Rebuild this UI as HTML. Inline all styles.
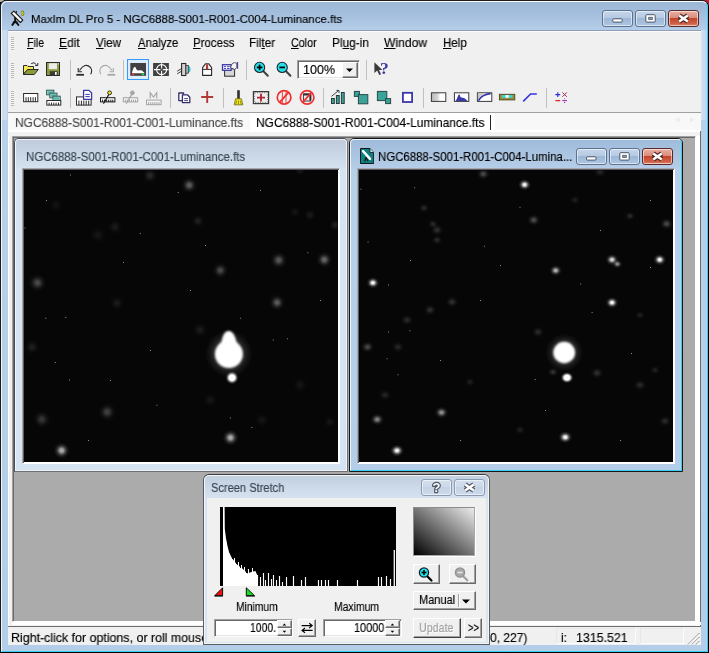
<!DOCTYPE html>
<html lang="en"><head><meta charset="utf-8"><title>MaxIm DL Pro 5 - NGC6888-S001-R001-C004-Luminance.fts</title>
<style>
html,body{margin:0;padding:0;background:#000;}
body{width:709px;height:653px;overflow:hidden;position:relative;font-family:"Liberation Sans",sans-serif;}
.t{position:absolute;white-space:pre;line-height:1;transform-origin:0 0;display:inline-block;will-change:transform;-webkit-text-stroke:0.15px currentColor;}
.t u{text-decoration:underline;text-underline-offset:1px;text-decoration-thickness:1px;}
#win{position:absolute;left:0;top:0;width:709px;height:653px;overflow:hidden;}
#frame{position:absolute;left:0;top:0;width:709px;height:653px;box-sizing:border-box;
  border:1px solid #1c1c1c;border-right-color:#000;border-bottom-color:#000;border-radius:6px 7px 0 0;
  background:linear-gradient(#9cb7d6 0px,#a3bedc 12px,#b3cce8 28px,#b9d1ea 31px,#b4cee9 100%);}
#frame:before{content:"";position:absolute;left:0;top:0;right:0;bottom:0;border-top:1px solid #fcfeff;border-left:1px solid #eef5fd;border-radius:6px 6px 0 0;
  border-right:1px solid #38cdf2;border-bottom:1px solid #38cdf2;}
#client{position:absolute;left:8px;top:30px;width:693px;height:615px;background:#f0f0f0;overflow:hidden;}
.cb{position:absolute;box-sizing:border-box;border:1px solid #5c7290;border-radius:3px;box-shadow:inset 0 0 0 1px rgba(255,255,255,.55);}
.sep{position:absolute;width:1px;background:#c2c0be;}
.grip{position:absolute;width:3px;background:repeating-linear-gradient(#b8b8b8 0,#b8b8b8 1px,#f6f6f6 1px,#f6f6f6 2px);}
.btn{position:absolute;box-sizing:border-box;background:#f0f0f0;border:1px solid;border-color:#fff #696969 #696969 #fff;box-shadow:inset -1px -1px 0 #a0a0a0, inset 1px 1px 0 #f0f0f0;}
.edit{position:absolute;box-sizing:border-box;background:#fff;border:1px solid;border-color:#a0a0a0 #fff #fff #a0a0a0;box-shadow:inset 1px 1px 0 #696969, inset -1px -1px 0 #e3e3e3;}
.child{position:absolute;box-sizing:border-box;}
</style></head><body>
<div id="win">
<div style="position:absolute;left:703px;top:0;width:6px;height:6px;background:#c81e3c"></div>
<div style="position:absolute;left:0;top:0;width:4px;height:2px;background:#b4b0ac"></div>
<div id="frame"></div>
<div style="position:absolute;left:2px;top:30px;width:5px;height:90px;background:#cbdcf0"></div>
<div style="position:absolute;left:701px;top:30px;width:6px;height:90px;background:linear-gradient(to right,#d4e2f3,#c6d9ef 60%,#bcd3ec)"></div>

<div id="titlebar" style="position:absolute;left:0;top:0;width:709px;height:30px">
<svg width="18" height="18" viewBox="0 0 18 18" style="position:absolute;left:10px;top:9px">
<path d="M5.2 8.6 V13 M5.2 12 L2.4 15.9 M5.2 12 L8.4 15.9 M3.6 13.2 H6.8" stroke="#0c0c0c" stroke-width="1.9" fill="none" stroke-linecap="round"/>
<path d="M5.4 2.2 L7 2 L6.8 4.4 Z" fill="#111"/>
<path d="M1.2 4.4 L3.9 2.1 L12.8 11.1 L10.4 13.5 Z" fill="#fdfaf6" stroke="#161616" stroke-width="1.1" stroke-linejoin="round"/>
<path d="M11.4 2.4 L13.4 1.9 L13.9 4.2 L13.3 6.6 L11.6 6.2 L12.2 4.3 Z" fill="#f4ee08" stroke="#6a6a10" stroke-width="0.7" stroke-linejoin="round"/>
</svg>
<span class="t" style="transform:scaleX(0.9696);left:30.70px;top:13.80px;font-size:11.8px;color:#000;">MaxIm DL Pro 5 - NGC6888-S001-R001-C004-Luminance.fts</span>
<div class="cb" style="left:602px;top:10px;width:31px;height:17px;background:linear-gradient(#c4d6ea 0%,#b6cae2 45%,#9db7d6 50%,#aec6e2 100%);border-color:#5c7290;"><svg width="31" height="17" viewBox="0 0 31 17" style="position:absolute;left:-1px;top:-1px"><rect x="10.8" y="8.8" width="9.4" height="3.3" rx="0.8" fill="#fff" stroke="#4a5568" stroke-width="1"/></svg></div>
<div class="cb" style="left:635px;top:10px;width:31px;height:17px;background:linear-gradient(#c4d6ea 0%,#b6cae2 45%,#9db7d6 50%,#aec6e2 100%);border-color:#5c7290;"><svg width="31" height="17" viewBox="0 0 31 17" style="position:absolute;left:-1px;top:-1px"><rect x="10.8" y="4.7" width="9.4" height="7.4" rx="0.8" fill="#fff" stroke="#4a5568" stroke-width="1"/><rect x="13.7" y="7.3" width="3.6" height="2.2" fill="#8aa0c0" stroke="#4a5568" stroke-width="0.8"/></svg></div>
<div class="cb" style="left:668px;top:10px;width:31px;height:17px;background:linear-gradient(#e9b0a4 0%,#dc8c7c 45%,#c4452c 50%,#cf6248 85%,#dc8a70 100%);border-color:#5a2a2a;"><svg width="31" height="17" viewBox="0 0 31 17" style="position:absolute;left:-1px;top:-1px"><path d="M11.2 5.5 L19.8 11.5 M19.8 5.5 L11.2 11.5" stroke="#4a2626" stroke-width="4.8" stroke-linecap="butt" fill="none"/><path d="M11.2 5.5 L19.8 11.5 M19.8 5.5 L11.2 11.5" stroke="#fff" stroke-width="2.6" stroke-linecap="butt" fill="none"/></svg></div>
</div>
<div id="client">
<div style="position:absolute;left:0;top:0;width:693px;height:1px;background:#929cb4;z-index:2"></div><div style="position:absolute;left:0;top:1px;width:693px;height:1px;background:#fbfbfb;z-index:2"></div>
<div id="menubar" style="position:absolute;left:0;top:0;width:693px;height:26px">
<div class="grip" style="left:3px;top:7px;height:14px"></div>
<span class="t" style="transform:scaleX(0.8451);left:18.85px;top:6.80px;font-size:12.6px;color:#000;"><u>F</u>ile</span>
<span class="t" style="transform:scaleX(0.9527);left:50.85px;top:6.80px;font-size:12.6px;color:#000;"><u>E</u>dit</span>
<span class="t" style="transform:scaleX(0.9259);left:88.00px;top:6.80px;font-size:12.6px;color:#000;"><u>V</u>iew</span>
<span class="t" style="transform:scaleX(0.8996);left:130.00px;top:6.80px;font-size:12.6px;color:#000;"><u>A</u>nalyze</span>
<span class="t" style="transform:scaleX(0.9096);left:185.09px;top:6.80px;font-size:12.6px;color:#000;"><u>P</u>rocess</span>
<span class="t" style="transform:scaleX(0.9369);left:240.86px;top:6.80px;font-size:12.6px;color:#000;">Fil<u>t</u>er</span>
<span class="t" style="transform:scaleX(0.8495);left:283.00px;top:6.80px;font-size:12.6px;color:#000;"><u>C</u>olor</span>
<span class="t" style="transform:scaleX(0.9398);left:323.76px;top:6.80px;font-size:12.6px;color:#000;">Pl<u>u</u>g-in</span>
<span class="t" style="transform:scaleX(0.9607);left:376.20px;top:6.80px;font-size:12.6px;color:#000;"><u>W</u>indow</span>
<span class="t" style="transform:scaleX(0.9158);left:435.28px;top:6.80px;font-size:12.6px;color:#000;"><u>H</u>elp</span>
</div>
<div id="toolbar1" style="position:absolute;left:0;top:26px;width:693px;height:28px">
<div class="grip" style="left:3px;top:7px;height:15px"></div>
<div class="sep" style="left:62px;top:4px;height:20px"></div>
<div class="sep" style="left:115px;top:4px;height:20px"></div>
<div class="sep" style="left:238px;top:4px;height:20px"></div>
<div class="sep" style="left:358px;top:4px;height:20px"></div>
<div style="position:absolute;left:119px;top:3px;width:22px;height:21px;box-sizing:border-box;border:1.4px solid #3399ff;background:#dcecfb"></div>
<svg class="icons" width="693" height="28" viewBox="8 56 693 28" style="position:absolute;left:0;top:0;will-change:transform"><g><path d="M23.5 65.5 H27 L28 66.5 H33.5 V69.5 H27.5 L23.5 74.5 Z" fill="#f4ec50" stroke="#2b2b2b" stroke-width="1" stroke-linejoin="round"/><path d="M27.5 69.5 H38.3 L34.3 74.5 H23.5 Z" fill="#8c9a3a" stroke="#2b2b2b" stroke-width="1" stroke-linejoin="round"/><path d="M31.2 63.6 Q34 61.2 36.6 64.8" stroke="#2b2b2b" stroke-width="1" fill="none"/><path d="M35.2 65.6 H37.8 V63" stroke="#2b2b2b" stroke-width="1" fill="none"/></g><g><rect x="46.5" y="62.5" width="13" height="13" fill="#8c9a3a" stroke="#2b2b2b" stroke-width="1"/><rect x="48.8" y="63.2" width="8.2" height="6" fill="#ececec"/><rect x="49.8" y="71.2" width="8" height="4" fill="#3a3a3a"/><rect x="55" y="72" width="1.7" height="2.8" fill="#fff"/><rect x="58" y="63.4" width="1" height="1" fill="#fff"/></g><g fill="none" stroke="#2b2b2b" stroke-width="1.1"><path d="M79.5 70.5 Q85 62 90.5 67.5 Q92.8 71 90.6 74.3"/><path d="M78.2 68 V71.8 H82" /><path d="M76.3 74.8 H84" stroke-width="1.8"/></g><g fill="none" stroke="#a8a8a8" stroke-width="1.1"><path d="M112 70.5 Q106.5 62 101 67.5 Q98.7 71 100.9 74.3"/><path d="M113.3 68 V71.8 H109.5"/><path d="M107.5 74.8 H115.2" stroke-width="1.8"/></g><g><rect x="130.3" y="63" width="15.7" height="12.8" fill="#404040"/><path d="M132 73.2 L132.6 70.2 L133.8 67.6 L135.2 66.8 L136.4 69.2 L137.6 70.6 L140.4 70.2 L142 70.6 L143.6 72 L144.8 73.2 Z" fill="#fff"/><rect x="132.2" y="73.6" width="2.2" height="1.6" fill="#ff3050"/><rect x="141.8" y="73.6" width="2.2" height="1.6" fill="#30e040"/></g><g><rect x="153.1" y="63" width="15.8" height="13" fill="#404040"/><circle cx="161.6" cy="69.6" r="5" fill="none" stroke="#fff" stroke-width="1.1"/><path d="M161.6 63.2 V68.4 M161.6 70.8 V75.8 M154 69.6 H160.4 M162.8 69.6 H168.6" stroke="#fff" stroke-width="1.1"/></g><g><path d="M187.6 65.6 Q190.3 66.4 190.2 69.3 Q190.3 72.2 187.6 73" fill="#28d8e8" stroke="#1a9aa8" stroke-width="0.6"/><rect x="185.6" y="65.4" width="2.6" height="7.8" fill="#d0d0d0" stroke="#2b2b2b" stroke-width="0.8"/><rect x="181.6" y="63.5" width="4.2" height="12" fill="#d4d4d4" stroke="#2b2b2b" stroke-width="1.1"/><path d="M181.2 68.8 L177.2 71.2 M181.2 71.4 L177.2 73.8" stroke="#2b2b2b" stroke-width="0.9" fill="none"/></g><g><path d="M202.6 75.4 V67.6 L205.4 63.8 H208.8 L211.6 67.6 V75.4 Z" fill="#fff" stroke="#2b2b2b" stroke-width="1.1" stroke-linejoin="round"/><path d="M202.8 69.4 H211.4" stroke="#2b2b2b" stroke-width="1"/><rect x="205.9" y="64.2" width="2.3" height="5" fill="#b03a3a"/></g><g><rect x="224.6" y="68.8" width="10" height="7.4" fill="#d6d6d6" stroke="#2b2b2b" stroke-width="1"/><rect x="222.5" y="64.7" width="8.6" height="5.6" fill="#f4f4ff" stroke="#3a38a8" stroke-width="1.3"/><path d="M224 66.6 H226 M227 66.6 H229.6 M224 68.5 H226 M227 68.5 H229.6" stroke="#3a38a8" stroke-width="0.9"/><path d="M230.4 67.6 L232.2 63.6 Q234.6 61.6 236.8 63.4 L236.8 67.8 L234.6 69.4 Z" fill="#f6f6f6" stroke="#444" stroke-width="0.9" stroke-linejoin="round"/><path d="M237.6 62 V68.8" stroke="#3a38a8" stroke-width="1.1"/></g><g><path d="M263.20000000000005 71.0 L267.8 75.80000000000001" stroke="#404040" stroke-width="2" stroke-linecap="round"/><circle cx="259.6" cy="67.4" r="5.1" fill="#26dfe8" stroke="#1a2a33" stroke-width="1.1"/><path d="M256.8 67.4 H262.40000000000003" stroke="#000" stroke-width="1.7"/><path d="M259.6 64.60000000000001 V70.2" stroke="#000" stroke-width="1.7"/></g><g><path d="M285.8 71.0 L290.4 75.80000000000001" stroke="#404040" stroke-width="2" stroke-linecap="round"/><circle cx="282.2" cy="67.4" r="5.1" fill="#26dfe8" stroke="#1a2a33" stroke-width="1.1"/><path d="M279.4 67.4 H285.0" stroke="#000" stroke-width="1.7"/></g><g><path d="M374.4 62.2 V73 L377.2 70.6 L379.2 75 L381 74.2 L379 70 H382.4 Z" fill="#3a3a3a"/><text x="380.0" y="73.6" font-family='"Liberation Serif", serif' font-weight="bold" font-size="17.5" fill="#3a38a8">?</text></g></svg>
<div class="edit" style="left:289px;top:3.8px;width:62.6px;height:19.6px"></div>
<div class="btn" style="left:334.4px;top:5.8px;width:15.4px;height:15.8px"><svg width="13" height="14" style="position:absolute;left:0;top:0"><path d="M3 5.5 h7 l-3.5 3.5z" fill="#000"/></svg></div>
<span class="t" style="transform:scaleX(0.9934);left:295.40px;top:7.60px;font-size:12.6px;color:#000;">100%</span>
</div>
<div id="toolbar2" style="position:absolute;left:0;top:54px;width:693px;height:28px">
<div class="grip" style="left:3px;top:7px;height:15px"></div>
<div class="sep" style="left:62px;top:4px;height:20px"></div>
<div class="sep" style="left:162px;top:4px;height:20px"></div>
<div class="sep" style="left:215px;top:4px;height:20px"></div>
<div class="sep" style="left:315px;top:4px;height:20px"></div>
<div class="sep" style="left:415px;top:4px;height:20px"></div>
<div class="sep" style="left:538px;top:4px;height:20px"></div>
<svg class="icons" width="693" height="28" viewBox="8 84 693 28" style="position:absolute;left:0;top:0;will-change:transform"><g><rect x="23.6" y="93.5" width="14.2" height="8.2" fill="#fff" stroke="#2b2b2b" stroke-width="1"/><path d="M26.0 97.2 V101.7M28.3 97.2 V101.7M30.7 97.2 V101.7M33.1 97.2 V101.7M35.4 97.2 V101.7" stroke="#2b2b2b" stroke-width="1" fill="none"/></g><g><rect x="46.6" y="90.2" width="7.2" height="4.6" fill="#bfe8e0" stroke="#2a5a55" stroke-width="1"/><rect x="47.6" y="91.2" width="5.2" height="2.5999999999999996" fill="#3aa39a" opacity="0.75"/><rect x="49.8" y="93.2" width="7.2" height="4.6" fill="#bfe8e0" stroke="#2a5a55" stroke-width="1"/><rect x="50.8" y="94.2" width="5.2" height="2.5999999999999996" fill="#3aa39a" opacity="0.75"/><rect x="53" y="96.2" width="7.2" height="4.6" fill="#bfe8e0" stroke="#2a5a55" stroke-width="1"/><rect x="54" y="97.2" width="5.2" height="2.5999999999999996" fill="#3aa39a" opacity="0.75"/><rect x="46.8" y="100.5" width="14" height="4.6" fill="#fff" stroke="#2b2b2b" stroke-width="1"/><path d="M49.1 102.6 V105.1M51.5 102.6 V105.1M53.8 102.6 V105.1M56.1 102.6 V105.1M58.5 102.6 V105.1" stroke="#2b2b2b" stroke-width="1" fill="none"/></g><g><rect x="76.5" y="96.9" width="14.6" height="8.2" fill="#fff" stroke="#2b2b2b" stroke-width="1"/><path d="M78.9 100.6 V105.10000000000001M81.4 100.6 V105.10000000000001M83.8 100.6 V105.10000000000001M86.2 100.6 V105.10000000000001M88.7 100.6 V105.10000000000001" stroke="#2b2b2b" stroke-width="1" fill="none"/><path d="M83.6 90.4 H89 L91.6 93 V99.4 H83.6 Z" fill="#fff" stroke="#3a38a8" stroke-width="1.3" stroke-linejoin="round"/><path d="M85.4 94.4 H89.8 M85.4 96.6 H89.8" stroke="#3a38a8" stroke-width="1"/></g><g><rect x="100.5" y="97.7" width="14.4" height="4.2" fill="#fff" stroke="#1a1a1a" stroke-width="1"/><path d="M102.6 99.6 V101.9M104.6 99.6 V101.9M106.7 99.6 V101.9M108.7 99.6 V101.9M110.8 99.6 V101.9M112.8 99.6 V101.9" stroke="#1a1a1a" stroke-width="1" fill="none"/><path d="M103.4 103.8 L109.4 93.6" stroke="#1a1a1a" stroke-width="1.1" fill="none"/><circle cx="109.6" cy="92.8" r="1.9" fill="#f4e820" stroke="#1a1a1a" stroke-width="0.9"/></g><g><rect x="123.3" y="97.7" width="14.4" height="4.2" fill="#f4f4f4" stroke="#a4a4a4" stroke-width="1"/><path d="M125.4 99.6 V101.9M127.4 99.6 V101.9M129.5 99.6 V101.9M131.5 99.6 V101.9M133.6 99.6 V101.9M135.6 99.6 V101.9" stroke="#a4a4a4" stroke-width="1" fill="none"/><path d="M126.2 103.8 L132.2 93.6" stroke="#a4a4a4" stroke-width="1.1" fill="none"/><circle cx="132.4" cy="92.8" r="1.9" fill="#a4a4a4" stroke="#a4a4a4" stroke-width="0.9"/></g><g><rect x="146.5" y="100.1" width="14.6" height="4.6" fill="#f4f4f4" stroke="#a4a4a4" stroke-width="1"/><path d="M148.6 102.2 V104.69999999999999M150.7 102.2 V104.69999999999999M152.8 102.2 V104.69999999999999M154.8 102.2 V104.69999999999999M156.9 102.2 V104.69999999999999M159.0 102.2 V104.69999999999999" stroke="#a4a4a4" stroke-width="1" fill="none"/><path d="M150.2 98.6 V92.6 L153.5 97 L156.8 92.6 V98.6" stroke="#a4a4a4" stroke-width="1.1" fill="none"/></g><g fill="#fff" stroke="#34306a" stroke-width="1.3" stroke-linejoin="round"><path d="M178.8 93 H183.6 V100.6 H178.8 Z"/><path d="M182.4 94.8 H187.4 L189.8 97.2 V102.6 H182.4 Z"/><path d="M184.2 98.6 H188 M184.2 100.6 H188" stroke-width="0.9"/></g><g stroke="#b33838" stroke-width="1.9" fill="none"><path d="M201.2 97 H213.2 M207.2 91 V103"/></g><g><path d="M237.2 90.2 h2.6 v8.8 h-2.6z" fill="#303030"/><path d="M235.6 98.8 H241.4 L242.8 104.8 H234.2 Z" fill="#f2ea18" stroke="#6a6410" stroke-width="0.8"/><path d="M236.6 100.6 L235.8 104.4 M238.5 100.6 V104.4 M240.4 100.6 L241.2 104.4" stroke="#6a6410" stroke-width="0.7"/></g><g><rect x="253.4" y="91.6" width="15.2" height="12" fill="#efefef" stroke="#3a3a3a" stroke-width="1.2"/><rect x="254.6" y="92.8" width="12.8" height="9.6" fill="none" stroke="#505050" stroke-width="1" stroke-dasharray="1 1.4" opacity="0.8"/><path d="M257 97.6 H265 M261 93.8 V101.4" stroke="#b02838" stroke-width="1.9"/></g><g><path d="M282.4 92 V103 M286 92 V103" stroke="#f05050" stroke-width="1.1"/><circle cx="284.1" cy="97.4" r="6.8" fill="none" stroke="#f03030" stroke-width="1.7"/><path d="M279.70000000000005 102.4 L288.5 92.4" stroke="#f03030" stroke-width="1.7"/></g><g><path d="M303.6 94.4 H310.4 V100.6" fill="none" stroke="#303030" stroke-width="2"/><rect x="303.4" y="94" width="7" height="7" fill="none" stroke="#303030" stroke-width="0.9"/><circle cx="307.1" cy="97.4" r="6.8" fill="none" stroke="#f03030" stroke-width="1.7"/><path d="M302.70000000000005 102.4 L311.5 92.4" stroke="#f03030" stroke-width="1.7"/></g><g fill="#3aa39a" stroke="#2a3a3a" stroke-width="1"><rect x="331.5" y="98.5" width="2.8" height="5"/><rect x="336.4" y="95.5" width="2.8" height="8"/><rect x="341.4" y="92.5" width="2.8" height="11"/><path d="M331.4 96.4 L338.6 90.6 M336.4 90.4 H339 V93" fill="none" stroke-width="0.9"/></g><g fill="#3aa39a" stroke="#2a4a48" stroke-width="1"><rect x="354.4" y="91.4" width="5" height="5"/><rect x="358.4" y="94.6" width="9.4" height="9.2"/></g><g fill="#3aa39a" stroke="#2a4a48" stroke-width="1"><rect x="377.4" y="91.4" width="9.4" height="9.2"/><rect x="385.6" y="98.6" width="5" height="5"/></g><rect x="402.9" y="92.8" width="9.2" height="9.2" fill="#fff" stroke="#3a38a8" stroke-width="1.8"/><defs><linearGradient id="gr1"><stop offset="0" stop-color="#b8b8b8"/><stop offset="0.45" stop-color="#d8d8d8"/><stop offset="0.6" stop-color="#fff"/></linearGradient></defs><rect x="431.4" y="92.8" width="14.4" height="8.6" fill="url(#gr1)" stroke="#3a3a3a" stroke-width="1"/><g><rect x="454.4" y="92.8" width="14.4" height="8.6" fill="#fff" stroke="#3a3a3a" stroke-width="1"/><path d="M455.6 100.9 L457 98.4 L458.4 95 L459.6 94.6 L460.6 97.2 L464.6 98.2 L467.6 100.9 Z" fill="#3a38a8"/></g><g><rect x="477.4" y="92.8" width="14.4" height="8.6" fill="#fff" stroke="#3a3a3a" stroke-width="1"/><path d="M477.9 93.3 H487 Q480 95 477.9 100 Z" fill="#c8c8c8"/><path d="M478.4 100.6 Q481.6 94.6 490.6 93.6" fill="none" stroke="#3a38a8" stroke-width="1.8"/></g><g><rect x="499.4" y="94.3" width="15.4" height="5.6" fill="#9a8c3a" stroke="#4a4420" stroke-width="0.9"/><rect x="501.8" y="95.2" width="10.6" height="2.4" fill="#30e0e8"/><rect x="505.6" y="95" width="3" height="2.8" fill="#fff"/></g><path d="M523.2 101.4 L530.6 94 H536.8" fill="none" stroke="#3434e0" stroke-width="1.6"/><g fill="none" stroke-width="1.1"><path d="M555.4 94.6 H560.2 M557.8 92.2 V97" stroke="#2828d8"/><path d="M562.4 92.4 L566.8 96.8 M566.8 92.4 L562.4 96.8" stroke="#a02848" stroke-width="1"/><path d="M555.4 100.6 H560.2" stroke="#e82828" stroke-width="1.3"/><path d="M562.2 100.6 H567" stroke="#a030c0"/><path d="M564.6 98.4 v0.9 M564.6 102 v0.9" stroke="#a030c0" stroke-width="1.2"/></g></svg>
</div>
<div style="position:absolute;left:0;top:82px;width:693px;height:1px;background:#a0a0a0"></div>
<div id="tabbar" style="position:absolute;left:0;top:83px;width:693px;height:17px;background:#f8f8f8">
<div style="position:absolute;left:242px;top:0;width:245px;height:17px;background:#fff"></div>
<span class="t" style="transform:scaleX(0.9474);left:7.35px;top:3.80px;font-size:12.6px;color:#484848;">NGC6888-S001-R001-C001-Luminance.fts</span>
<span class="t" style="transform:scaleX(0.9486);left:247.85px;top:3.80px;font-size:12.6px;color:#000;">NGC6888-S001-R001-C004-Luminance.fts</span>
<div style="position:absolute;left:482px;top:2px;width:1px;height:15px;background:#222"></div>
<span class="t" style="left:666.50px;top:2.00px;font-size:9px;color:#ebebeb;">&#9666;</span>
<span class="t" style="left:681.50px;top:2.00px;font-size:9px;color:#ebebeb;">&#9656;</span>
</div>
<div style="position:absolute;left:0;top:100px;width:693px;height:2px;background:#fff"></div>
<div style="position:absolute;left:0;top:102px;width:693px;height:4px;background:#f2f2f2"></div>
<div id="mdi" style="position:absolute;left:0px;top:106px;width:693px;height:490px;background:#f0f0f0">
<div style="position:absolute;left:0;top:0;width:1px;height:490px;background:#fff"></div>
<div style="position:absolute;left:4px;top:0;width:684px;height:486px;box-sizing:border-box;background:#ababab;border:1px solid;border-color:#a0a0a0 #fff #fff #a0a0a0;box-shadow:inset 1px 1px 0 #696969"></div>
<div style="position:absolute;left:688px;top:0;width:5px;height:490px;background:#fff"></div>
<div style="position:absolute;left:692px;top:-5px;width:1px;height:496px;background:#6c6c6c"></div>
<div style="position:absolute;left:4px;top:486px;width:689px;height:3px;background:#fff"></div>
</div>
<div id="status" style="position:absolute;left:0;top:596px;width:693px;height:19px;border-top:1px solid #6e6e6e;box-sizing:border-box;background:#f0f0f0">
<span class="t" style="transform:scaleX(0.9849);left:2.72px;top:4.70px;font-size:12.6px;color:#000;">Right-click for options, or roll mouse</span>
<span class="t" style="transform:scaleX(0.9535);left:482.30px;top:4.90px;font-size:12.6px;color:#000;">0, 227)</span>
<span class="t" style="transform:scaleX(0.9314);left:553.40px;top:4.90px;font-size:12.6px;color:#000;">i:</span>
<span class="t" style="transform:scaleX(0.9843);left:568.30px;top:4.90px;font-size:12.6px;color:#000;">1315.521</span>
<div style="position:absolute;left:548px;top:1px;width:80px;height:16px;box-sizing:border-box;border:1px solid;border-color:#e6e6e6 #fcfcfc #fcfcfc #e6e6e6"></div>
<div style="position:absolute;left:631.5px;top:1px;width:44.5px;height:16px;box-sizing:border-box;border:1px solid;border-color:#e6e6e6 #fcfcfc #fcfcfc #e6e6e6"></div>
<svg width="13" height="13" viewBox="0 0 13 13" style="position:absolute;left:679px;top:5px"><path d="M1 12.5 L12.5 1 M5 12.5 L12.5 5 M9 12.5 L12.5 9" stroke="#7c7c7c" stroke-width="1" fill="none"/><path d="M2 12.5 L12.5 2 M6 12.5 L12.5 6 M10 12.5 L12.5 10" stroke="#fff" stroke-width="1" fill="none"/></svg>
</div>
</div>
<div class="child" style="left:14px;top:138px;width:334px;height:334px;border:1px solid;border-color:#4c4c56 #707070 #707070 #4c4c56;border-radius:5px 5px 0 0;background:linear-gradient(#bfcbdb 0px,#c8d5e4 14px,#d4e1ef 29px,#d6e3f2 31px,#d6e3f2 100%);"><div style="position:absolute;left:0;top:0;right:0;bottom:0;border:1px solid;border-color:#eef2fa #eef4fb #eef4fb #f2f4fc;border-radius:4px 4px 0 0"></div><div style="position:absolute;left:7px;top:29px;width:318px;height:296px;box-sizing:border-box;border:1px solid;border-color:#a4a8ae #fff #fff #a4a8ae;box-shadow:inset 1px 1px 0 #5c5c5c, inset -1px -1px 0 #fff;background:#000"></div></div>
<span class="t" style="transform:scaleX(0.9317);left:25.87px;top:150.80px;font-size:12.3px;color:#38444f;">NGC6888-S001-R001-C001-Luminance.fts</span>
<svg class="sky" width="314" height="292" viewBox="0 0 314 292" style="position:absolute;left:24px;top:170px"><defs><radialGradient id="g1"><stop offset="0" stop-color="#fff" stop-opacity="1"/><stop offset="0.22" stop-color="#fff" stop-opacity="0.9"/><stop offset="0.45" stop-color="#fff" stop-opacity="0.45"/><stop offset="0.7" stop-color="#fff" stop-opacity="0.13"/><stop offset="1" stop-color="#fff" stop-opacity="0"/></radialGradient><radialGradient id="c1"><stop offset="0" stop-color="#fff" stop-opacity="1"/><stop offset="0.42" stop-color="#fff" stop-opacity="1"/><stop offset="0.62" stop-color="#fff" stop-opacity="0.55"/><stop offset="0.82" stop-color="#fff" stop-opacity="0.15"/><stop offset="1" stop-color="#fff" stop-opacity="0"/></radialGradient><radialGradient id="k1"><stop offset="0" stop-color="#fff" stop-opacity="0.5"/><stop offset="0.55" stop-color="#fff" stop-opacity="0.28"/><stop offset="0.8" stop-color="#fff" stop-opacity="0.1"/><stop offset="1" stop-color="#fff" stop-opacity="0"/></radialGradient><filter id="f1" x="-30%" y="-30%" width="160%" height="160%"><feGaussianBlur stdDeviation="0.9"/></filter></defs><rect width="314" height="292" fill="#060606"/><ellipse cx="165.2" cy="15.2" rx="8.0" ry="8.0" fill="url(#g1)" opacity="0.35"/><ellipse cx="126.0" cy="5.5" rx="8.0" ry="8.0" fill="url(#g1)" opacity="0.14"/><ellipse cx="254.7" cy="90.2" rx="8.5" ry="8.5" fill="url(#g1)" opacity="0.32"/><ellipse cx="300.3" cy="89.7" rx="8.0" ry="8.0" fill="url(#g1)" opacity="0.38"/><ellipse cx="196.3" cy="100.4" rx="8.0" ry="8.0" fill="url(#g1)" opacity="0.27"/><ellipse cx="13.5" cy="112.8" rx="9.0" ry="9.0" fill="url(#g1)" opacity="0.27"/><ellipse cx="253.1" cy="132.6" rx="8.0" ry="8.0" fill="url(#g1)" opacity="0.34"/><ellipse cx="208.0" cy="207.7" rx="6.6" ry="6.6" fill="url(#c1)"/><ellipse cx="83.2" cy="242.0" rx="9.0" ry="9.0" fill="url(#g1)" opacity="0.23"/><ellipse cx="17.8" cy="249.4" rx="9.0" ry="9.0" fill="url(#g1)" opacity="0.19"/><ellipse cx="206.5" cy="267.7" rx="8.0" ry="8.0" fill="url(#g1)" opacity="0.68"/><ellipse cx="37.6" cy="280.5" rx="8.0" ry="8.0" fill="url(#g1)" opacity="0.68"/><ellipse cx="8.0" cy="177.0" rx="8.0" ry="8.0" fill="url(#g1)" opacity="0.1"/><ellipse cx="91.0" cy="57.0" rx="8.0" ry="8.0" fill="url(#g1)" opacity="0.08"/><ellipse cx="311.0" cy="55.0" rx="7.0" ry="7.0" fill="url(#g1)" opacity="0.1"/><ellipse cx="276.0" cy="0.0" rx="7.0" ry="7.0" fill="url(#g1)" opacity="0.08"/><ellipse cx="176.0" cy="160.0" rx="8.0" ry="8.0" fill="url(#g1)" opacity="0.09"/><ellipse cx="238.0" cy="250.0" rx="8.0" ry="8.0" fill="url(#g1)" opacity="0.06"/><ellipse cx="276.0" cy="215.0" rx="8.0" ry="8.0" fill="url(#g1)" opacity="0.06"/><ellipse cx="74.0" cy="65.0" rx="9.0" ry="9.0" fill="url(#g1)" opacity="0.06"/><ellipse cx="93.0" cy="133.0" rx="8.0" ry="8.0" fill="url(#g1)" opacity="0.08"/><ellipse cx="186.0" cy="230.0" rx="8.0" ry="8.0" fill="url(#g1)" opacity="0.06"/><ellipse cx="286.0" cy="45.0" rx="7.0" ry="7.0" fill="url(#g1)" opacity="0.08"/><ellipse cx="32.0" cy="35.0" rx="8.0" ry="8.0" fill="url(#g1)" opacity="0.05"/><ellipse cx="174.0" cy="51.0" rx="7.0" ry="7.0" fill="url(#g1)" opacity="0.1"/><ellipse cx="271.0" cy="42.0" rx="7.0" ry="7.0" fill="url(#g1)" opacity="0.06"/><ellipse cx="306.0" cy="252.0" rx="7.0" ry="7.0" fill="url(#g1)" opacity="0.06"/><path d="M0.4 57.6h1v1h-1zM115.8 62.9h1v1h-1zM21.3 147.8h1v1h-1zM41.3 146.9h1v1h-1zM153.7 22.0h1v1h-1zM46.0 4.5h1v1h-1zM215.9 147.8h1v1h-1zM283.3 82.3h1v1h-1zM248.7 169.6h1v1h-1zM262.9 168.2h1v1h-1zM205.9 247.5h1v1h-1zM227.3 257.0h1v1h-1zM30.8 192.0h1v1h-1zM45.0 209.5h1v1h-1zM132.4 234.7h1v1h-1zM99.0 92.0h1v1h-1zM166.0 120.0h1v1h-1zM64.0 270.0h1v1h-1zM126.0 180.0h1v1h-1zM296.0 130.0h1v1h-1zM181.0 75.0h1v1h-1zM236.0 20.0h1v1h-1zM22.0 30.0h1v1h-1zM86.0 210.0h1v1h-1z" fill="#fff" opacity="0.55"/><g filter="url(#f1)"><circle cx="204.9" cy="184.1" r="14" fill="#fff"/><path d="M196.8 175 C198 169 199 164.5 201.2 162.4 Q204.7 159.6 208.2 162.4 C210.6 164.5 212 169 213.2 175 Z" fill="#fff"/></g><circle cx="204.9" cy="183.6" r="24" fill="url(#k1)" opacity="0.6"/></svg>
<div class="child" style="left:349px;top:138px;width:334px;height:334px;border:1px solid #161616;border-radius:5px 5px 0 0;background:linear-gradient(#9fbbda 0px,#a9c3e0 14px,#b5cde8 29px,#b7d0ea 31px,#b4ceea 100%);"><div style="position:absolute;left:0;top:0;right:0;bottom:0;border:1px solid;border-color:#eaf3fc #3acdf2 #3acdf2 #eaf3fc;border-radius:4px 4px 0 0"></div><div style="position:absolute;left:7px;top:29px;width:318px;height:296px;box-sizing:border-box;border:1px solid;border-color:#a4a8ae #fff #fff #a4a8ae;box-shadow:inset 1px 1px 0 #5c5c5c, inset -1px -1px 0 #fff;background:#000"></div></div>
<svg width="14.2" height="16" viewBox="0 0 15 16" preserveAspectRatio="none" style="position:absolute;left:360px;top:148px">
<path d="M0.5 0.5 H10.5 L14.5 4.5 V15.5 H0.5 Z" fill="#0d7f7f" stroke="#111" stroke-width="1"/>
<path d="M10.5 0.5 V4.5 H14.5" fill="#c8e8e8" stroke="#111" stroke-width="0.8"/>
<path d="M3.2 3.2 L10.6 10.8" stroke="#fff" stroke-width="2.6" stroke-linecap="round"/>
<path d="M6.2 9.5 L5 13.5 M6.2 9.5 L8.6 13.2" stroke="#111" stroke-width="1.2" fill="none"/>
</svg>
<span class="t" style="transform:scaleX(0.9291);left:378.47px;top:150.80px;font-size:12.3px;color:#000;">NGC6888-S001-R001-C004-Lumina...</span>
<div class="cb" style="left:576.4px;top:148px;width:30.6px;height:17px;background:linear-gradient(#c4d6ea 0%,#b6cae2 45%,#9db7d6 50%,#aec6e2 100%);border-color:#5c7290;"><svg width="30.6" height="17" viewBox="0 0 30.6 17" style="position:absolute;left:-1px;top:-1px"><rect x="10.600000000000001" y="8.8" width="9.4" height="3.3" rx="0.8" fill="#fff" stroke="#4a5568" stroke-width="1"/></svg></div>
<div class="cb" style="left:609px;top:148px;width:31px;height:17px;background:linear-gradient(#c4d6ea 0%,#b6cae2 45%,#9db7d6 50%,#aec6e2 100%);border-color:#5c7290;"><svg width="31" height="17" viewBox="0 0 31 17" style="position:absolute;left:-1px;top:-1px"><rect x="10.8" y="4.7" width="9.4" height="7.4" rx="0.8" fill="#fff" stroke="#4a5568" stroke-width="1"/><rect x="13.7" y="7.3" width="3.6" height="2.2" fill="#8aa0c0" stroke="#4a5568" stroke-width="0.8"/></svg></div>
<div class="cb" style="left:642px;top:148px;width:31px;height:17px;background:linear-gradient(#e9b0a4 0%,#dc8c7c 45%,#c4452c 50%,#cf6248 85%,#dc8a70 100%);border-color:#5a2a2a;"><svg width="31" height="17" viewBox="0 0 31 17" style="position:absolute;left:-1px;top:-1px"><path d="M11.2 5.5 L19.8 11.5 M19.8 5.5 L11.2 11.5" stroke="#4a2626" stroke-width="4.8" stroke-linecap="butt" fill="none"/><path d="M11.2 5.5 L19.8 11.5 M19.8 5.5 L11.2 11.5" stroke="#fff" stroke-width="2.6" stroke-linecap="butt" fill="none"/></svg></div>
<svg class="sky" width="314" height="292" viewBox="0 0 314 292" style="position:absolute;left:359px;top:170px"><defs><radialGradient id="g2"><stop offset="0" stop-color="#fff" stop-opacity="1"/><stop offset="0.22" stop-color="#fff" stop-opacity="0.9"/><stop offset="0.45" stop-color="#fff" stop-opacity="0.45"/><stop offset="0.7" stop-color="#fff" stop-opacity="0.13"/><stop offset="1" stop-color="#fff" stop-opacity="0"/></radialGradient><radialGradient id="c2"><stop offset="0" stop-color="#fff" stop-opacity="1"/><stop offset="0.42" stop-color="#fff" stop-opacity="1"/><stop offset="0.62" stop-color="#fff" stop-opacity="0.55"/><stop offset="0.82" stop-color="#fff" stop-opacity="0.15"/><stop offset="1" stop-color="#fff" stop-opacity="0"/></radialGradient><radialGradient id="k2"><stop offset="0" stop-color="#fff" stop-opacity="0.5"/><stop offset="0.55" stop-color="#fff" stop-opacity="0.28"/><stop offset="0.8" stop-color="#fff" stop-opacity="0.1"/><stop offset="1" stop-color="#fff" stop-opacity="0"/></radialGradient><filter id="f2" x="-30%" y="-30%" width="160%" height="160%"><feGaussianBlur stdDeviation="0.9"/></filter></defs><rect width="314" height="292" fill="#060606"/><ellipse cx="165.6" cy="14.7" rx="6.4" ry="5.6" fill="url(#g2)" opacity="1.0"/><ellipse cx="253.0" cy="89.7" rx="6.4" ry="5.6" fill="url(#g2)" opacity="0.85"/><ellipse cx="258.3" cy="94.0" rx="5.2" ry="4.5" fill="url(#g2)" opacity="0.55"/><ellipse cx="300.7" cy="89.7" rx="6.4" ry="5.6" fill="url(#g2)" opacity="1.0"/><ellipse cx="196.7" cy="100.5" rx="6.3" ry="5.5" fill="url(#g2)" opacity="0.7"/><ellipse cx="13.9" cy="112.8" rx="6.4" ry="5.6" fill="url(#g2)" opacity="1.0"/><ellipse cx="253.0" cy="132.6" rx="6.4" ry="5.6" fill="url(#g2)" opacity="1.0"/><ellipse cx="208.0" cy="207.6" rx="6.4" ry="5.6" fill="url(#c2)"/><ellipse cx="82.5" cy="242.5" rx="6.9" ry="6.0" fill="url(#g2)" opacity="0.55"/><ellipse cx="18.2" cy="249.5" rx="6.9" ry="6.0" fill="url(#g2)" opacity="0.5"/><ellipse cx="206.3" cy="267.2" rx="6.9" ry="6.0" fill="url(#g2)" opacity="1.0"/><ellipse cx="38.0" cy="280.6" rx="6.9" ry="6.0" fill="url(#g2)" opacity="1.0"/><ellipse cx="8.5" cy="177.0" rx="6.9" ry="6.0" fill="url(#g2)" opacity="0.26"/><ellipse cx="174.7" cy="50.0" rx="6.9" ry="6.0" fill="url(#g2)" opacity="0.28"/><ellipse cx="124.3" cy="4.0" rx="6.9" ry="6.0" fill="url(#g2)" opacity="0.26"/><ellipse cx="307.6" cy="53.8" rx="6.9" ry="6.0" fill="url(#g2)" opacity="0.26"/><ellipse cx="78.0" cy="60.0" rx="6.9" ry="6.0" fill="url(#g2)" opacity="0.16"/><ellipse cx="241.0" cy="2.0" rx="6.9" ry="6.0" fill="url(#g2)" opacity="0.12"/><ellipse cx="71.0" cy="140.0" rx="6.9" ry="6.0" fill="url(#g2)" opacity="0.16"/><ellipse cx="93.0" cy="132.0" rx="6.9" ry="6.0" fill="url(#g2)" opacity="0.16"/><ellipse cx="281.0" cy="215.0" rx="6.9" ry="6.0" fill="url(#g2)" opacity="0.14"/><ellipse cx="238.0" cy="203.0" rx="6.9" ry="6.0" fill="url(#g2)" opacity="0.16"/><ellipse cx="306.0" cy="251.0" rx="6.9" ry="6.0" fill="url(#g2)" opacity="0.14"/><ellipse cx="65.0" cy="38.0" rx="5.8" ry="5.0" fill="url(#g2)" opacity="0.14"/><ellipse cx="74.0" cy="54.0" rx="5.8" ry="5.0" fill="url(#g2)" opacity="0.14"/><ellipse cx="78.0" cy="70.0" rx="5.8" ry="5.0" fill="url(#g2)" opacity="0.14"/><ellipse cx="48.0" cy="150.0" rx="6.9" ry="6.0" fill="url(#g2)" opacity="0.14"/><ellipse cx="39.0" cy="177.0" rx="6.9" ry="6.0" fill="url(#g2)" opacity="0.12"/><ellipse cx="179.0" cy="162.0" rx="6.9" ry="6.0" fill="url(#g2)" opacity="0.14"/><ellipse cx="26.0" cy="225.0" rx="6.9" ry="6.0" fill="url(#g2)" opacity="0.12"/><ellipse cx="194.0" cy="202.0" rx="5.8" ry="5.0" fill="url(#g2)" opacity="0.18"/><ellipse cx="271.0" cy="46.0" rx="5.8" ry="5.0" fill="url(#g2)" opacity="0.14"/><ellipse cx="296.0" cy="200.0" rx="5.8" ry="5.0" fill="url(#g2)" opacity="0.1"/><ellipse cx="161.0" cy="260.0" rx="5.8" ry="5.0" fill="url(#g2)" opacity="0.1"/><ellipse cx="111.0" cy="212.0" rx="5.8" ry="5.0" fill="url(#g2)" opacity="0.1"/><ellipse cx="216.0" cy="30.0" rx="5.8" ry="5.0" fill="url(#g2)" opacity="0.1"/><ellipse cx="281.0" cy="145.0" rx="5.8" ry="5.0" fill="url(#g2)" opacity="0.1"/><path d="M8.6 71.4h1v1h-1zM124.9 75.7h1v1h-1zM29.0 114.6h1v1h-1zM1.5 18.7h1v1h-1zM55.1 17.3h1v1h-1zM160.5 36.8h1v1h-1zM291.0 97.0h1v1h-1zM29.0 161.6h1v1h-1zM50.4 160.2h1v1h-1zM27.6 188.2h1v1h-1zM38.5 204.3h1v1h-1zM175.7 209.0h1v1h-1zM272.0 183.0h1v1h-1zM221.2 113.6h1v1h-1zM232.6 142.1h1v1h-1zM101.0 270.0h1v1h-1zM141.0 95.0h1v1h-1zM186.0 240.0h1v1h-1zM261.0 270.0h1v1h-1zM81.0 190.0h1v1h-1zM121.0 130.0h1v1h-1zM241.0 60.0h1v1h-1zM51.0 90.0h1v1h-1zM291.0 30.0h1v1h-1z" fill="#fff" opacity="0.55"/><g filter="url(#f2)"><ellipse cx="205.2" cy="182.5" rx="10.9" ry="10.7" fill="#fff"/></g><circle cx="205.2" cy="182.5" r="19" fill="url(#k2)" opacity="0.55"/></svg>
<div id="dlg" style="position:absolute;left:203px;top:474px;width:287px;height:171px;box-sizing:border-box;border:1px solid;border-color:#3c3c3c #5c5c5c #5c5c5c #5c5c5c;border-radius:6px 6px 1px 1px;background:linear-gradient(#c0cede 0px,#ccd9e8 12px,#d6e2f0 23px,#d8e4f2 25px,#d8e4f2 100%);">
<div style="position:absolute;left:0;top:0;right:0;bottom:0;border:1px solid #f2f7fc;border-radius:5px 5px 0 0"></div>
<div style="position:absolute;left:3px;top:23px;width:279px;height:144px;background:#f0f0f0"></div>
<span class="t" style="transform:scaleX(0.9019);left:6.80px;top:7.40px;font-size:12.3px;color:#3a4654;">Screen Stretch</span>
</div>
<div class="cb" style="left:421px;top:479px;width:31px;height:17px;background:linear-gradient(#d3dfee 0%,#ccd9ea 45%,#c4d2e5 50%,#cddaea 100%);border-color:#8d9bb2;"><svg width="31" height="17" viewBox="0 0 31 17" style="position:absolute;left:-1px;top:-1px"><text x="15.5" y="13.1" text-anchor="middle" font-family='"Liberation Sans", sans-serif' font-weight="bold" font-size="13" fill="#fff" stroke="#4e5666" stroke-width="2.4" paint-order="stroke" stroke-linejoin="round">?</text></svg></div>
<div class="cb" style="left:454px;top:479px;width:31px;height:17px;background:linear-gradient(#d3dfee 0%,#ccd9ea 45%,#c4d2e5 50%,#cddaea 100%);border-color:#8d9bb2;"><svg width="31" height="17" viewBox="0 0 31 17" style="position:absolute;left:-1px;top:-1px"><path d="M11.2 5.5 L19.8 11.5 M19.8 5.5 L11.2 11.5" stroke="#4e5666" stroke-width="4.8" stroke-linecap="butt" fill="none"/><path d="M11.2 5.5 L19.8 11.5 M19.8 5.5 L11.2 11.5" stroke="#fff" stroke-width="2.6" stroke-linecap="butt" fill="none"/></svg></div>
<svg id="hist" width="176.4" height="79" viewBox="0 0 176.4 79" style="position:absolute;left:220px;top:507px">
<rect width="176.4" height="79" fill="#000"/>
<path d="M3 79 L3 0 L4.6 0 L4.8 22 L6 31.3 L7.5 39 L9 45 L11.6 50.4 L14.4 54.3 L17 57.4 L19.6 59.4 L22.4 61.6 L25 64 L27.6 66.5 L30 65.4 L33 64.6 L35.4 64 L37.2 68 L37.2 79 Z" fill="#fff"/>
<path d="M14.5 56V51 M18.5 60V55 M21.5 62V58 M24.5 65V60 M28.5 67V62 M32.5 66V61" stroke="#fff" stroke-width="1" fill="none"/>
<path d="M12.5 47V52 M16.5 52V57 M20.5 56V61 M26.5 61V66" stroke="#000" stroke-width="1" fill="none"/>
<path d="M37.5 79V68 M40.5 79V70 M43.5 79V66 M45.5 79V73 M48.5 79V66 M51.5 79V72 M53.5 79V68 M56.5 79V73 M59.5 79V69 M62.5 79V75 M66.5 79V70 M73.5 79V69 M81.5 79V73 M85.5 79V70 M98.5 79V73 M101.5 79V73 M105.5 79V73 M108.5 79V73 M117.5 79V73 M137.5 79V73 M158.5 79V70 M161.5 79V70 M166.5 79V69 M170.5 79V72" stroke="#fff" stroke-width="1.15" fill="none"/>
<path d="M174.3 79V43" stroke="#fff" stroke-width="1.3" fill="none"/>
</svg>
<svg width="46" height="12" viewBox="0 0 46 12" style="position:absolute;left:212px;top:585.5px">
<path d="M2.8 9.6 H10.6 V1.8 Z" fill="#f01010" stroke="#101010" stroke-width="1"/>
<path d="M34.3 1.8 V9.6 H42.4 Z" fill="#10e020" stroke="#101010" stroke-width="1"/>
<path d="M2.4 10.1 H11 M34 10.1 H43" stroke="#000" stroke-width="0.9"/></svg>
<span class="t" style="transform:scaleX(0.8349);left:235.77px;top:600.70px;font-size:12.3px;color:#000;">Minimum</span>
<span class="t" style="transform:scaleX(0.8454);left:333.55px;top:600.80px;font-size:12.3px;color:#000;">Maximum</span>
<div class="edit" style="left:214px;top:618.5px;width:79px;height:18.5px"></div>
<div class="btn" style="left:276.8px;top:620px;width:15px;height:8px"><svg width="13" height="6" style="position:absolute;left:0;top:0"><path d="M4.6 4.4 h3.6 l-1.8 -1.9z" fill="#000"/></svg></div><div class="btn" style="left:276.8px;top:628px;width:15px;height:8px"><svg width="13" height="6" style="position:absolute;left:0;top:0"><path d="M4.6 1.8 h3.6 l-1.8 1.9z" fill="#000"/></svg></div>
<span class="t" style="transform:scaleX(0.8466);left:249.80px;top:621.80px;font-size:12.3px;color:#000;">1000.</span>
<div class="btn" style="left:298px;top:619px;width:18px;height:18px"><svg width="16" height="16" style="position:absolute;left:0;top:0"><path d="M2.6 5.6 H13 M10.2 3.2 L13.2 5.6 L10.2 8 M13.6 10.4 H3.2 M6 8 L3 10.4 L6 12.8" stroke="#000" stroke-width="1.1" fill="none"/></svg></div>
<div class="edit" style="left:322.5px;top:618.5px;width:79px;height:18.5px"></div>
<div class="btn" style="left:385.3px;top:620px;width:15px;height:8px"><svg width="13" height="6" style="position:absolute;left:0;top:0"><path d="M4.6 4.4 h3.6 l-1.8 -1.9z" fill="#000"/></svg></div><div class="btn" style="left:385.3px;top:628px;width:15px;height:8px"><svg width="13" height="6" style="position:absolute;left:0;top:0"><path d="M4.6 1.8 h3.6 l-1.8 1.9z" fill="#000"/></svg></div>
<span class="t" style="transform:scaleX(0.8878);left:354.20px;top:621.90px;font-size:12.3px;color:#000;">10000</span>
<div style="position:absolute;box-sizing:border-box;left:413.3px;top:507px;width:62px;height:48.6px;border:1px solid;border-color:#8c8c8c #a8a8a8 #a8a8a8 #8c8c8c;box-shadow:1px 1px 0 #fff;background:linear-gradient(to top right,#000 0%,#767676 50%,#ececec 100%)"></div>
<div class="btn" style="left:413px;top:564px;width:27px;height:20px"><svg width="25" height="18" viewBox="0 0 25 18" style="position:absolute;left:0;top:0">
<path d="M12.5 10.5 L17.5 15.5" stroke="#000" stroke-width="2.2" stroke-linecap="round"/>
<circle cx="10" cy="7.5" r="4.6" fill="#20e0e8" stroke="#102030" stroke-width="1.3"/>
<path d="M7.5 7.5 H12.5 M10 5 V10" stroke="#000" stroke-width="1.6"/></svg></div>
<div class="btn" style="left:448.5px;top:564px;width:27px;height:20px"><svg width="25" height="18" viewBox="0 0 25 18" style="position:absolute;left:0;top:0">
<path d="M13.5 11.5 L18.5 16.5" stroke="#fff" stroke-width="2.2" stroke-linecap="round"/>
<path d="M12.5 10.5 L17.5 15.5" stroke="#a0a0a0" stroke-width="2.2" stroke-linecap="round"/>
<circle cx="10" cy="7.5" r="4.6" fill="#a8a8a8" stroke="#909090" stroke-width="1.3"/>
<path d="M7.5 7.5 H12.5" stroke="#e8e8e8" stroke-width="1.6"/></svg></div>
<div class="btn" style="left:413px;top:590.5px;width:63px;height:19px"><div style="position:absolute;left:43.6px;top:2px;width:1px;height:13px;background:#a0a0a0;box-shadow:1px 0 0 #fff"></div><svg width="12" height="12" style="position:absolute;left:46px;top:3px"><path d="M2 4.5 h8 l-4 4z" fill="#000"/></svg></div>
<span class="t" style="transform:scaleX(0.8964);left:418.50px;top:594.20px;font-size:12.3px;color:#000;">Manual</span>
<div class="btn" style="left:413px;top:618.3px;width:47.6px;height:19.4px;border-color:#fff #404040 #404040 #fff"></div>
<span class="t" style="transform:scaleX(0.8690);left:419.40px;top:622.40px;font-size:12.3px;color:#a0a0a0;text-shadow:1px 1px 0 #fff;">Update</span>
<div class="btn" style="left:464px;top:618.3px;width:17.8px;height:19.4px"></div>
<span class="t" style="transform:scaleX(0.7616);left:468.00px;top:622.40px;font-size:12.3px;color:#000;">&gt;&gt;</span>
</div></body></html>
